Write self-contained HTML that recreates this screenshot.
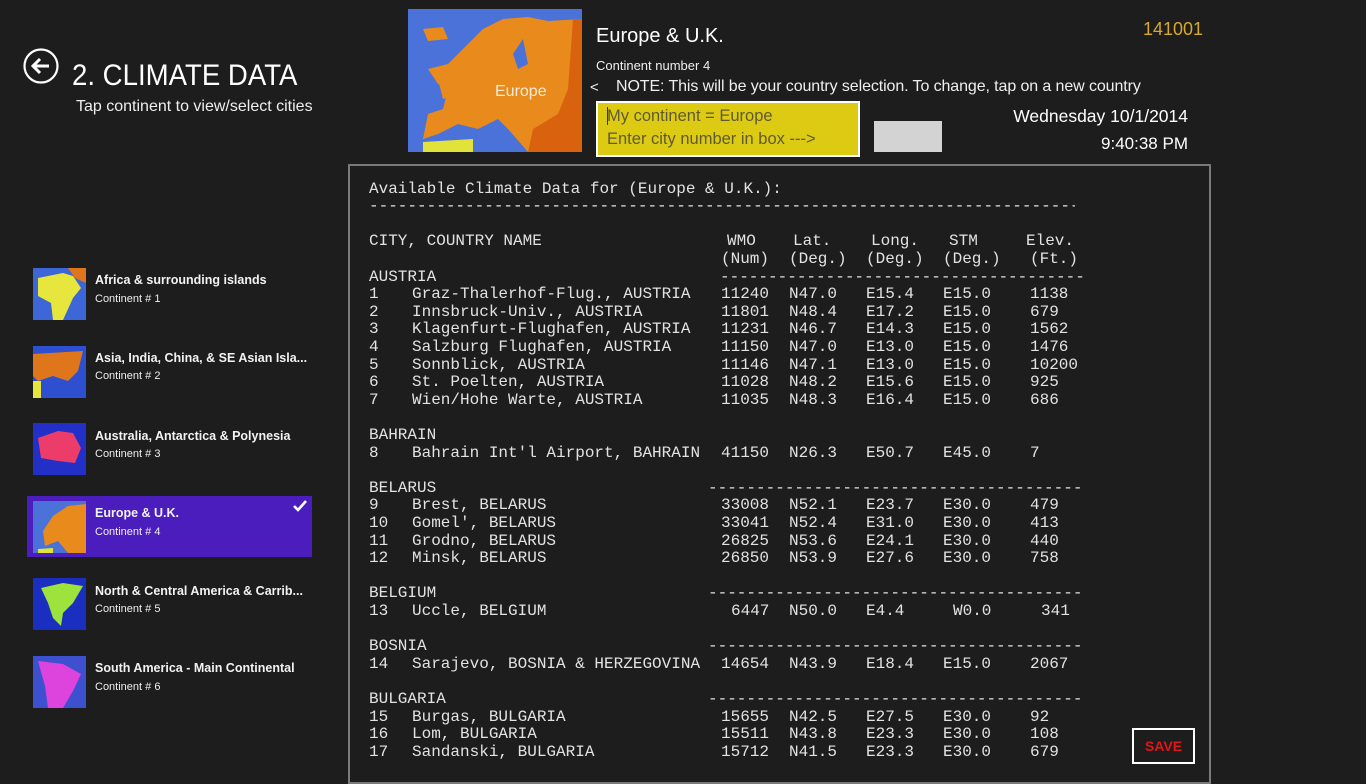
<!DOCTYPE html>
<html><head><meta charset="utf-8"><style>
*{margin:0;padding:0;box-sizing:border-box}
body{width:1366px;height:768px;overflow:hidden;background:#1d1d1d;color:#fff;font-family:"Liberation Sans",sans-serif;position:relative}
.a{position:absolute;white-space:nowrap}
.item .t{position:absolute;left:95px;font-size:12.5px;font-weight:bold;color:#f2f2f2}
.item .s{position:absolute;left:95px;font-size:11px;color:#eee}
.th{position:absolute;left:33px;width:53px;height:52px}
#tb{position:absolute;left:369px;top:1.5px;font-family:"Liberation Mono",monospace;font-size:16px;line-height:17.6px;color:#e2e2e2;white-space:pre}
#tb div{position:absolute;left:0;height:17.6px;width:800px}
#tb span{position:absolute;top:0}
.c1{left:43px}.c2{left:352px}.c3{left:420px}.c4{left:497px}.c5{left:574px}.c6{left:661px}
.d{overflow:hidden;height:17.6px}
</style></head><body>

<svg class="a" style="left:22px;top:47px" width="38" height="38" viewBox="0 0 38 38"><circle cx="19" cy="19" r="16.5" fill="none" stroke="#fff" stroke-width="2.2"/><path d="M27 19H12M18 12l-7 7 7 7" fill="none" stroke="#fff" stroke-width="3"/></svg>
<div class="a" style="left:72px;top:59px;font-size:30px;font-weight:300;color:#fff;transform:scaleX(0.92);transform-origin:left">2. CLIMATE DATA</div>
<div class="a" style="left:76px;top:98px;font-size:16px;color:#eee">Tap continent to view/select cities</div>

<svg class="a" style="left:408px;top:9px" width="174" height="143" viewBox="0 0 174 143">
<rect width="174" height="143" fill="#4a72d8"/>
<path d="M20 60 L40 55 L55 40 L75 20 L95 10 L120 8 L140 12 L174 10 L174 143 L120 143 L100 120 L90 110 L70 120 L50 115 L30 125 L15 130 L20 105 L35 100 L40 80 L30 75 Z" fill="#e98b1c"/>
<path d="M15 20 L35 18 L40 30 L20 32Z M30 70 L45 60 L50 85 L35 90Z" fill="#e98b1c"/>
<path d="M165 10 L174 10 L174 143 L120 143 L125 120 L150 105 L160 80Z" fill="#d9620f"/>
<path d="M15 133 L65 130 L65 143 L15 143Z" fill="#e2e33a"/>
<path d="M105 45 L115 30 L120 55 L110 60Z" fill="#4a72d8"/>
<text x="87" y="87" font-family="Liberation Sans" font-size="16" fill="#f4ead8">Europe</text>
</svg>

<div class="a" style="left:596px;top:25px;font-size:20px;color:#fff">Europe &amp; U.K.</div>
<div class="a" style="left:596px;top:58px;font-size:13px;color:#eee">Continent number 4</div>
<div class="a" style="left:590px;top:79px;font-size:15px;color:#eee">&lt;</div>
<div class="a" style="left:616px;top:78px;font-size:16px;color:#eee;letter-spacing:-0.1px">NOTE: This will be your country selection. To change, tap on a new country</div>
<div class="a" style="left:596px;top:101px;width:264px;height:56px;background:#dccb12;border:2px solid #fff"></div>
<div class="a" style="left:607px;top:105px;font-size:16.5px;color:#5f5a30;line-height:23px">My continent = Europe<br>Enter city number in box ---&gt;</div>
<div class="a" style="left:607px;top:107px;width:1px;height:18px;background:#333"></div>
<div class="a" style="left:874px;top:121px;width:68px;height:31px;background:#d3d3d3"></div>
<div class="a" style="left:1143px;top:19px;font-size:18px;color:#d8a928">141001</div>
<div class="a" style="right:178px;top:106px;font-size:17.5px;color:#fff">Wednesday 10/1/2014</div>
<div class="a" style="right:178px;top:134px;font-size:17px;color:#fff">9:40:38 PM</div>

<div class="a" style="left:27px;top:496px;width:285px;height:61px;background:#4b1dbd"></div>
<svg class="a" style="left:292px;top:499px" width="16" height="14" viewBox="0 0 16 14"><path d="M2 7l4 4 8-9" fill="none" stroke="#fff" stroke-width="2.6"/></svg>

<div class="item">
<svg class="th" style="top:268px" viewBox="0 0 53 52"><rect width="53" height="52" fill="#3d66d6"/><path d="M5 10 L30 5 L40 8 L48 20 L40 30 L30 52 L20 52 L18 35 L5 28Z" fill="#e6e63c"/><path d="M35 0 L53 0 L53 15 L42 10Z" fill="#e0761c"/></svg>
<div class="t" style="top:273px">Africa &amp; surrounding islands</div><div class="s" style="top:293px">Continent # 1</div>
<svg class="th" style="top:346px" viewBox="0 0 53 52"><rect width="53" height="52" fill="#2d4fd0"/><path d="M0 8 L50 5 L45 25 L35 35 L20 30 L5 35 L0 30Z" fill="#e0761c"/><path d="M0 35 L8 35 L8 52 L0 52Z" fill="#e6e63c"/></svg>
<div class="t" style="top:351px">Asia, India, China, &amp; SE Asian Isla...</div><div class="s" style="top:370px">Continent # 2</div>
<svg class="th" style="top:423px" viewBox="0 0 53 52"><rect width="53" height="52" fill="#2230c8"/><path d="M5 15 L25 8 L40 10 L48 25 L42 40 L25 38 L8 35Z" fill="#ec3c6a"/></svg>
<div class="t" style="top:429px">Australia, Antarctica &amp; Polynesia</div><div class="s" style="top:448px">Continent # 3</div>
<svg class="th" style="top:501px" viewBox="0 0 53 52"><rect width="53" height="52" fill="#4a72d8"/><path d="M10 30 L20 15 L35 5 L53 3 L53 52 L35 52 L25 40 L12 45Z" fill="#e98b1c"/><path d="M5 48 L20 47 L20 52 L5 52Z" fill="#e2e33a"/></svg>
<div class="t" style="top:506px">Europe &amp; U.K.</div><div class="s" style="top:526px">Continent # 4</div>
<svg class="th" style="top:578px" viewBox="0 0 53 52"><rect width="53" height="52" fill="#1a2ec0"/><path d="M8 10 L30 5 L50 8 L40 25 L30 35 L28 48 L20 40 L15 25Z" fill="#9ee33c"/></svg>
<div class="t" style="top:584px">North &amp; Central America &amp; Carrib...</div><div class="s" style="top:603px">Continent # 5</div>
<svg class="th" style="top:656px" viewBox="0 0 53 52"><rect width="53" height="52" fill="#3d50d0"/><path d="M5 5 L30 8 L48 18 L40 35 L30 52 L15 52 L12 30Z" fill="#dd44dd"/></svg>
<div class="t" style="top:661px">South America - Main Continental</div><div class="s" style="top:681px">Continent # 6</div>
</div>

<div class="a" style="left:348px;top:164px;width:863px;height:620px;border:2px solid #7a7a7a"></div>

<div id="tb">
<div style="top:179px"><span>Available Climate Data for (Europe &amp; U.K.):</span></div>
<div class="d" style="top:196.6px;width:706px"><span>--------------------------------------------------------------------------------</span></div>
<div style="top:231.8px"><span>CITY, COUNTRY NAME</span><span style="left:358px">WMO</span><span style="left:424px">Lat.</span><span style="left:502px">Long.</span><span style="left:580px">STM</span><span style="left:657px">Elev.</span></div>
<div style="top:249.4px"><span class="c2">(Num)</span><span class="c3">(Deg.)</span><span class="c4">(Deg.)</span><span class="c5">(Deg.)</span><span class="c6">(Ft.)</span></div>
<div style="top:267px"><span>AUSTRIA</span><span class="d" style="left:351px;width:363px">----------------------------------------</span></div>
<div style="top:284.6px"><span>1</span><span class="c1">Graz-Thalerhof-Flug., AUSTRIA</span><span class="c2">11240</span><span class="c3">N47.0</span><span class="c4">E15.4</span><span class="c5">E15.0</span><span class="c6">1138</span></div>
<div style="top:302.2px"><span>2</span><span class="c1">Innsbruck-Univ., AUSTRIA</span><span class="c2">11801</span><span class="c3">N48.4</span><span class="c4">E17.2</span><span class="c5">E15.0</span><span class="c6">679</span></div>
<div style="top:319.8px"><span>3</span><span class="c1">Klagenfurt-Flughafen, AUSTRIA</span><span class="c2">11231</span><span class="c3">N46.7</span><span class="c4">E14.3</span><span class="c5">E15.0</span><span class="c6">1562</span></div>
<div style="top:337.4px"><span>4</span><span class="c1">Salzburg Flughafen, AUSTRIA</span><span class="c2">11150</span><span class="c3">N47.0</span><span class="c4">E13.0</span><span class="c5">E15.0</span><span class="c6">1476</span></div>
<div style="top:355px"><span>5</span><span class="c1">Sonnblick, AUSTRIA</span><span class="c2">11146</span><span class="c3">N47.1</span><span class="c4">E13.0</span><span class="c5">E15.0</span><span class="c6">10200</span></div>
<div style="top:372.6px"><span>6</span><span class="c1">St. Poelten, AUSTRIA</span><span class="c2">11028</span><span class="c3">N48.2</span><span class="c4">E15.6</span><span class="c5">E15.0</span><span class="c6">925</span></div>
<div style="top:390.2px"><span>7</span><span class="c1">Wien/Hohe Warte, AUSTRIA</span><span class="c2">11035</span><span class="c3">N48.3</span><span class="c4">E16.4</span><span class="c5">E15.0</span><span class="c6">686</span></div>
<div style="top:425.4px"><span>BAHRAIN</span></div>
<div style="top:443px"><span>8</span><span class="c1">Bahrain Int'l Airport, BAHRAIN</span><span class="c2">41150</span><span class="c3">N26.3</span><span class="c4">E50.7</span><span class="c5">E45.0</span><span class="c6">7</span></div>
<div style="top:478.2px"><span>BELARUS</span><span class="d" style="left:339px;width:375px">-----------------------------------------</span></div>
<div style="top:495.8px"><span>9</span><span class="c1">Brest, BELARUS</span><span class="c2">33008</span><span class="c3">N52.1</span><span class="c4">E23.7</span><span class="c5">E30.0</span><span class="c6">479</span></div>
<div style="top:513.4px"><span>10</span><span class="c1">Gomel', BELARUS</span><span class="c2">33041</span><span class="c3">N52.4</span><span class="c4">E31.0</span><span class="c5">E30.0</span><span class="c6">413</span></div>
<div style="top:531px"><span>11</span><span class="c1">Grodno, BELARUS</span><span class="c2">26825</span><span class="c3">N53.6</span><span class="c4">E24.1</span><span class="c5">E30.0</span><span class="c6">440</span></div>
<div style="top:548.6px"><span>12</span><span class="c1">Minsk, BELARUS</span><span class="c2">26850</span><span class="c3">N53.9</span><span class="c4">E27.6</span><span class="c5">E30.0</span><span class="c6">758</span></div>
<div style="top:583.8px"><span>BELGIUM</span><span class="d" style="left:339px;width:375px">-----------------------------------------</span></div>
<div style="top:601.4px"><span>13</span><span class="c1">Uccle, BELGIUM</span><span style="left:362px">6447</span><span class="c3">N50.0</span><span class="c4">E4.4</span><span style="left:584px">W0.0</span><span style="left:672px">341</span></div>
<div style="top:636.6px"><span>BOSNIA</span><span class="d" style="left:339px;width:375px">-----------------------------------------</span></div>
<div style="top:654.2px"><span>14</span><span class="c1">Sarajevo, BOSNIA &amp; HERZEGOVINA</span><span class="c2">14654</span><span class="c3">N43.9</span><span class="c4">E18.4</span><span class="c5">E15.0</span><span class="c6">2067</span></div>
<div style="top:689.4px"><span>BULGARIA</span><span class="d" style="left:339px;width:375px">-----------------------------------------</span></div>
<div style="top:707px"><span>15</span><span class="c1">Burgas, BULGARIA</span><span class="c2">15655</span><span class="c3">N42.5</span><span class="c4">E27.5</span><span class="c5">E30.0</span><span class="c6">92</span></div>
<div style="top:724.6px"><span>16</span><span class="c1">Lom, BULGARIA</span><span class="c2">15511</span><span class="c3">N43.8</span><span class="c4">E23.3</span><span class="c5">E30.0</span><span class="c6">108</span></div>
<div style="top:742.2px"><span>17</span><span class="c1">Sandanski, BULGARIA</span><span class="c2">15712</span><span class="c3">N41.5</span><span class="c4">E23.3</span><span class="c5">E30.0</span><span class="c6">679</span></div>
</div>

<div class="a" style="left:1132px;top:728px;width:63px;height:36px;border:2px solid #fff;color:#e01515;font-weight:bold;font-size:14px;text-align:center;line-height:32px">SAVE</div>
</body></html>
